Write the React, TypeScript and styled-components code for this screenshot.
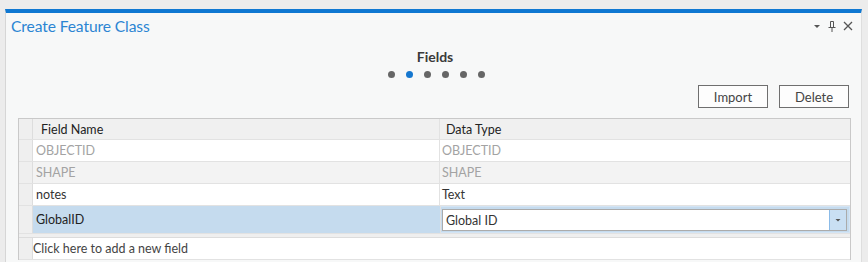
import React from "react";
import styled, { createGlobalStyle } from "styled-components";

const GlobalStyle = createGlobalStyle`
  html, body {
    margin: 0;
    padding: 0;
    background: #ececec;
    font-family: "Lato", "Noto Sans", sans-serif;
  }
`;

const Page = styled.div`
  padding: 9px 6px 0 5px;
  height: 262px;
  box-sizing: border-box;
  overflow: hidden;
`;

const Panel = styled.div`
  background: #f7f8f8;
  border-top: 4px solid #0f78d2;
  border-left: 1px solid #d6d6d6;
  border-right: 1px solid #dedede;
  height: 100%;
  box-sizing: border-box;
`;

const TitleBar = styled.div`
  display: flex;
  align-items: center;
  justify-content: space-between;
  padding: 3px 8px 0 5px;
  height: 20px;
`;

const Title = styled.div`
  color: #2b85d3;
  font-size: 15.6px;
  letter-spacing: -0.1px;
`;

const Tools = styled.div`
  display: flex;
  align-items: center;
  gap: 6px;
  color: #555;
`;

const StepHeader = styled.div`
  display: flex;
  flex-direction: column;
  align-items: center;
  padding-top: 12px;
`;

const StepTitle = styled.div`
  font-size: 14px;
  font-weight: 700;
  color: #3a3a3a;
  padding-left: 3px;
`;

const Dots = styled.div`
  display: flex;
  gap: 11px;
  margin-top: 6px;
  padding-left: 6px;
`;

const Dot = styled.span<{ $active?: boolean }>`
  width: 7px;
  height: 7px;
  border-radius: 50%;
  background: ${(p) => (p.$active ? "#1577cf" : "#666")};
`;

const Actions = styled.div`
  display: flex;
  justify-content: flex-end;
  gap: 11px;
  padding: 7px 12px 0 0;
`;

const Button = styled.button`
  width: 70px;
  height: 23px;
  box-sizing: border-box;
  border: 1px solid #6f6f6f;
  background: #fdfdfd;
  color: #444;
  font-family: inherit;
  font-size: 13px;
  padding: 0;
`;

const Table = styled.div`
  margin: 10px 0 0 12px;
  width: 831px;
  border: 1px solid #c9c9c9;
  border-bottom: none;
  background: #efefef;
  font-size: 12.5px;
`;

const Row = styled.div<{ $h?: number; $gap?: boolean }>`
  display: flex;
  height: ${(p) => p.$h ?? 21}px;
  border-bottom: 1px solid #e2e2e2;
  ${(p) => (p.$gap ? "margin-top: 3px; border-top: 1px solid #dcdcdc;" : "")}
`;

const Marker = styled.div`
  width: 13px;
  border-right: 1px solid #dddddd;
  background: #efefef;
`;

const Cell = styled.div<{ $w?: number; $bg: string; $color: string; $pad: number }>`
  ${(p) => (p.$w ? `width: ${p.$w}px;` : "flex: 1;")}
  display: flex;
  align-items: center;
  background: ${(p) => p.$bg};
  color: ${(p) => p.$color};
  padding-left: ${(p) => p.$pad}px;
  box-sizing: border-box;
  border-right: 1px solid #e2e2e2;
  &:last-child {
    border-right: none;
  }
`;

const TypeBox = styled.div`
  flex: 1;
  display: flex;
  align-items: center;
  background: #c5dbee;
  padding: 2px 2px 1px 1px;
  border: 1px solid #d3e4f4;
  border-left: none;
`;

const Combo = styled.div`
  flex: 1;
  height: 22px;
  display: flex;
  align-items: stretch;
  background: #fff;
  border: 1px solid #ababab;
  box-sizing: border-box;
  color: #333;
`;

const ComboText = styled.span`
  flex: 1;
  display: flex;
  align-items: center;
  padding-left: 3px;
`;

const ComboArrow = styled.span`
  width: 16px;
  display: flex;
  align-items: center;
  justify-content: center;
  background: #c9dff3;
  border-left: 1px solid #8bbbe8;
`;

type Field = { name: string; type: string; muted?: boolean; bg: string };

const fields: Field[] = [
  { name: "OBJECTID", type: "OBJECTID", muted: true, bg: "#ffffff" },
  { name: "SHAPE", type: "SHAPE", muted: true, bg: "#f3f3f3" },
  { name: "notes", type: "Text", bg: "#ffffff" },
];

const App = () => {
  return (
    <>
      <GlobalStyle />
      <Page>
        <Panel>
          <TitleBar>
            <Title>Create Feature Class</Title>
            <Tools>
              <svg width="8" height="8" viewBox="0 0 8 8">
                <path d="M1 3h6L4 6z" fill="#555" />
              </svg>
              <svg width="10" height="11" viewBox="0 0 10 11">
                <path d="M3.5 0.5h3v6h-3z" fill="none" stroke="#555" />
                <path d="M1.5 6.5h7M5 6.5v4.5" stroke="#555" />
              </svg>
              <svg width="10" height="10" viewBox="0 0 10 10">
                <path d="M1 1l8 8M9 1l-8 8" stroke="#555" strokeWidth="1.3" />
              </svg>
            </Tools>
          </TitleBar>
          <StepHeader>
            <StepTitle>Fields</StepTitle>
            <Dots>
              {[0, 1, 2, 3, 4, 5].map((i) => (
                <Dot key={i} $active={i === 1} />
              ))}
            </Dots>
          </StepHeader>
          <Actions>
            <Button>Import</Button>
            <Button>Delete</Button>
          </Actions>
          <Table>
            <Row $h={20}>
              <Marker />
              <Cell $w={407} $bg="#f0f0f0" $color="#222" $pad={8}>
                Field Name
              </Cell>
              <Cell $bg="#f0f0f0" $color="#222" $pad={6}>
                Data Type
              </Cell>
            </Row>
            {fields.map((f) => (
              <Row key={f.name}>
                <Marker />
                <Cell $w={407} $bg={f.bg} $color={f.muted ? "#a3a3a3" : "#333"} $pad={3}>
                  {f.name}
                </Cell>
                <Cell $bg={f.bg} $color={f.muted ? "#a3a3a3" : "#333"} $pad={2}>
                  {f.type}
                </Cell>
              </Row>
            ))}
            <Row $h={27}>
              <Marker />
              <Cell $w={408} $bg="#c5dbee" $color="#222" $pad={3}>
                GlobalID
              </Cell>
              <TypeBox>
                <Combo>
                  <ComboText>Global ID</ComboText>
                  <ComboArrow>
                    <svg width="6" height="4" viewBox="0 0 6 4">
                      <path d="M0.5 1h5L3 3.5z" fill="#555" />
                    </svg>
                  </ComboArrow>
                </Combo>
              </TypeBox>
            </Row>
            <Row $gap>
              <Marker />
              <Cell $bg="#ffffff" $color="#444" $pad={0}>
                Click here to add a new field
              </Cell>
            </Row>
          </Table>
        </Panel>
      </Page>
    </>
  );
};

export default App;
